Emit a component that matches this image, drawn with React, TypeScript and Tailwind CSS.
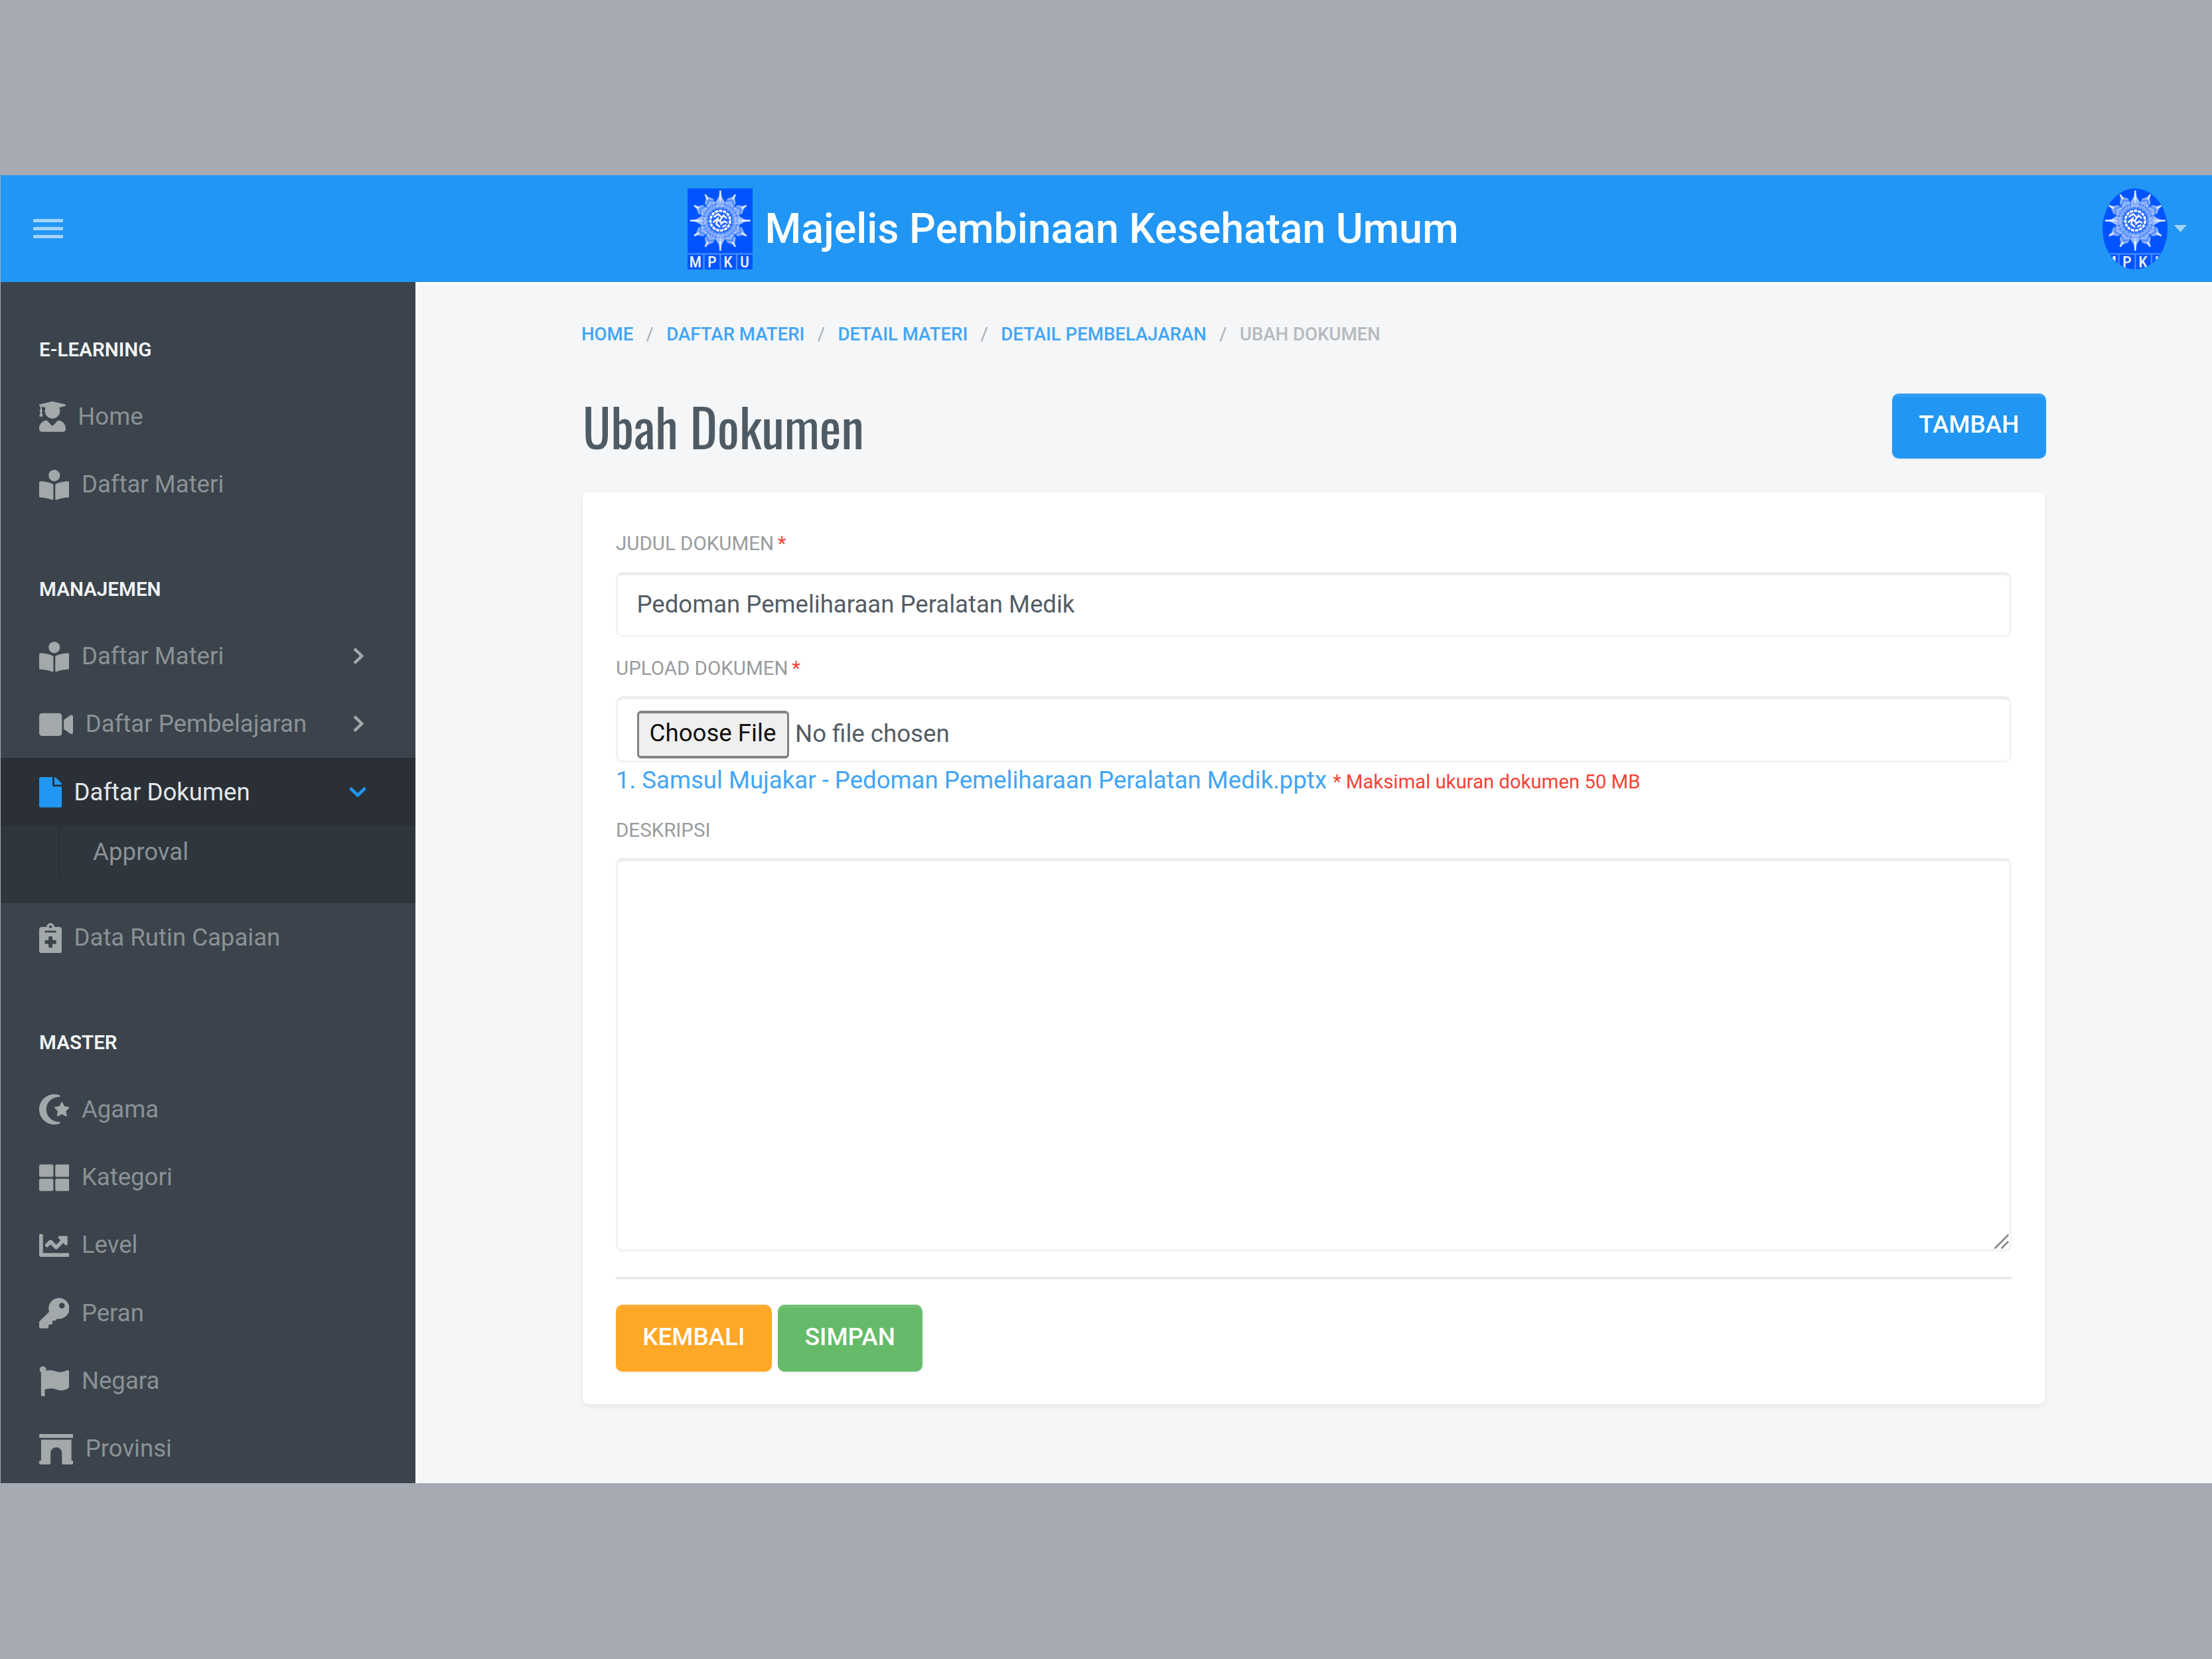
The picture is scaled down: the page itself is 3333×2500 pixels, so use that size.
import React from "react";
import type { IconType } from "react-icons";
import {
  FaArchway,
  FaBookReader,
  FaChartLine,
  FaFile,
  FaFlag,
  FaKey,
  FaNotesMedical,
  FaStarAndCrescent,
  FaThLarge,
  FaUserGraduate,
  FaVideo,
} from "react-icons/fa";

type Item = {
  icon: IconType;
  iconWidth: string;
  label: string;
  arrow?: "right" | "down";
  children?: string[];
};

const W_384 = "w-[34.3px]";
const W_448 = "w-[40px]";
const W_512 = "w-[45.7px]";
const W_576 = "w-[51.5px]";

const sections: { title: string; height: string; items: Item[] }[] = [
  {
    title: "E-LEARNING",
    height: "h-[151px]",
    items: [
      { icon: FaUserGraduate, iconWidth: W_448, label: "Home" },
      { icon: FaBookReader, iconWidth: W_512, label: "Daftar Materi" },
    ],
  },
  {
    title: "MANAJEMEN",
    height: "h-[156.5px]",
    items: [
      { icon: FaBookReader, iconWidth: W_512, label: "Daftar Materi", arrow: "right" },
      { icon: FaVideo, iconWidth: W_576, label: "Daftar Pembelajaran", arrow: "right" },
      { icon: FaFile, iconWidth: W_384, label: "Daftar Dokumen", arrow: "down", children: ["Approval"] },
      { icon: FaNotesMedical, iconWidth: W_384, label: "Data Rutin Capaian" },
    ],
  },
  {
    title: "MASTER",
    height: "h-[156px]",
    items: [
      { icon: FaStarAndCrescent, iconWidth: W_512, label: "Agama" },
      { icon: FaThLarge, iconWidth: W_512, label: "Kategori" },
      { icon: FaChartLine, iconWidth: W_512, label: "Level" },
      { icon: FaKey, iconWidth: W_512, label: "Peran" },
      { icon: FaFlag, iconWidth: W_512, label: "Negara" },
      { icon: FaArchway, iconWidth: W_576, label: "Provinsi" },
    ],
  },
];

const crumbs = ["HOME", "DAFTAR MATERI", "DETAIL MATERI", "DETAIL PEMBELAJARAN"];

function Logo() {
  const rays = Array.from({ length: 12 }, (_, i) => i * 30);
  return (
    <svg viewBox="0 0 98 122" className="block h-[122px] w-[98px] overflow-visible">
      <rect width="98" height="122" fill="#0054ff" />
      <g transform="translate(49.3 48.5)">
        <circle r="24" fill="none" stroke="#fff" strokeOpacity="0.22" strokeWidth="12" />
        {rays.map((a) => {
          const long = a % 90 === 0;
          return (
            <g key={a} transform={`rotate(${a})`}>
              <path
                d={
                  long
                    ? "M0 -46.5L2.6 -36L7 -28L5 -18H-5L-7 -28L-2.6 -36Z"
                    : "M0 -45.5L2.2 -41L7.5 -34L7 -28L5 -18H-5L-7 -28L-7.5 -34L-2.2 -41Z"
                }
                fill="#fff"
                fillOpacity={long ? 0.46 : 0.36}
              />
              <path d={long ? "M0 -45.5L0 -30" : "M0 -45.5L0 -37"} stroke="#fff" strokeOpacity="0.8" strokeWidth="2.6" />
              <path
                d={long ? "M-4.5 -29L0 -36L4.5 -29M-4 -23L0 -29L4 -23" : "M-6.5 -33L0 -39L6.5 -33M-6 -27L0 -32L6 -27"}
                fill="none"
                stroke="#fff"
                strokeOpacity="0.45"
                strokeWidth="1.5"
              />
            </g>
          );
        })}
        <circle r="25.5" fill="none" stroke="#0054ff" strokeOpacity="0.45" strokeWidth="2" strokeDasharray="3 2" />
        <circle r="19.5" fill="none" stroke="#0054ff" strokeOpacity="0.5" strokeWidth="2.4" strokeDasharray="4 1.5" />
        <circle r="15" fill="#2b6bff" stroke="#fff" strokeWidth="3.4" strokeDasharray="5 1.2" />
        <path
          d="M-9 -6L-3 -10L1 -6M-10 2L-4 -3L-6 5L-1 9M0 -1L5 -8L9 -4M1 5L6 1L10 3M-3 -1L2 3M4 9L8 7"
          fill="none"
          stroke="#fff"
          strokeWidth="2.4"
          strokeLinecap="round"
        />
      </g>
      <path d="M0 98.6H98M24.6 98.6V122M49.4 98.6V122M74 98.6V122" stroke="#4a8cff" strokeWidth="2.4" />
      <g fill="#fff" fillOpacity="0.92" fontFamily="'Roboto Condensed', Roboto, sans-serif" fontWeight="500" fontSize="24.5" textAnchor="middle">
        <text x="11.8" y="119.3">M</text>
        <text x="36.8" y="119.3">P</text>
        <text x="61" y="119.3">K</text>
        <text x="86" y="119.3">U</text>
      </g>
    </svg>
  );
}

function Header() {
  return (
    <header className="flex h-[161px] items-center bg-[#2196f5] pr-[38px] pl-[48.5px]">
      <div className="flex w-[45.5px] flex-col gap-[6.5px]">
        <div className="h-[5.5px] bg-[#a3d3fb]" />
        <div className="h-[5.5px] bg-[#a3d3fb]" />
        <div className="h-[5.5px] bg-[#a3d3fb]" />
      </div>
      <div className="ml-[940.5px] flex items-center gap-[19px]">
        <Logo />
        <span className="pt-[1px] text-[62.6px] leading-none font-medium whitespace-nowrap text-white">
          Majelis Pembinaan Kesehatan Umum
        </span>
      </div>
      <div className="ml-auto flex items-center gap-[10px]">
        <div className="overflow-hidden rounded-[50%]">
          <Logo />
        </div>
        <svg viewBox="0 0 19 11" className="h-[11px] w-[19px]">
          <path d="M0 0H19L9.5 11Z" fill="#a3d3fb" />
        </svg>
      </div>
    </header>
  );
}

function NavItem({ item }: { item: Item }) {
  const Icon = item.icon;
  const active = item.arrow === "down";
  return (
    <li>
      <div className={`flex h-[102.4px] items-center pr-[75px] pl-[57.5px] ${active ? "bg-[#2a3036]" : ""}`}>
        <Icon
          preserveAspectRatio="xMidYMid meet"
          className={`mt-[2px] h-[45.7px] shrink-0 ${item.iconWidth} ${active ? "text-[#2196f3]" : "text-[#a3a8ab]"}`}
        />
        <span className={`ml-[18.7px] pt-[1px] text-[36.6px] leading-[38px] whitespace-nowrap ${active ? "text-[#e4e7ea]" : "text-[#8b9195]"}`}>
          {item.label}
        </span>
        {item.arrow === "right" && (
          <svg viewBox="0 0 25 25" className="mr-[-1px] ml-auto h-[25px] w-[25px]" fill="none" stroke="#a3a8ab" strokeWidth="4.4">
            <path d="M7 1.7L18.2 12.5L7 23.3" />
          </svg>
        )}
        {item.arrow === "down" && (
          <svg viewBox="0 0 26 25" className="mr-[-1px] ml-auto h-[25px] w-[26px]" fill="none" stroke="#2196f3" strokeWidth="4.8">
            <path d="M1.7 6.5L13 17.5L24.3 6.5" />
          </svg>
        )}
      </div>
      {item.children && (
        <ul className="h-[117px] bg-[#2f363d] pl-[87px]">
          {item.children.map((c) => (
            <li key={c} className="flex h-[78px] items-center border-l-[3px] border-[#2a3036] pt-[1px] pl-[49px] text-[36.7px] leading-none text-[#8b9195]">
              {c}
            </li>
          ))}
        </ul>
      )}
    </li>
  );
}

function Sidebar() {
  return (
    <aside className="w-[625px] shrink-0 overflow-hidden bg-[#3b444c]">
      {sections.map((s) => (
        <section key={s.title}>
          <h2 className={`flex items-end pb-[31px] pl-[58px] text-[29.6px] leading-[36px] font-semibold text-[#f2f4f5] ${s.height}`}>
            {s.title}
          </h2>
          <ul>
            {s.items.map((item) => (
              <NavItem key={item.label} item={item} />
            ))}
          </ul>
        </section>
      ))}
    </aside>
  );
}

function Label({ children, required }: { children: string; required?: boolean }) {
  return (
    <label className="block text-[29.5px] leading-[40px] whitespace-nowrap text-[#989c9d]">
      {children}
      {required && <span className="ml-[-1.5px] text-[#f44336]"> *</span>}
    </label>
  );
}

const field = "rounded-[10px] border-[3px] border-t-[5px] border-[#f1f3f3] border-t-[#ededed] bg-white";
const button =
  "flex items-center justify-center rounded-[10px] pb-[2px] text-[36.8px] leading-none font-medium text-white shadow-[inset_0_5px_0_rgba(255,255,255,0.08),0_2px_3px_rgba(0,0,0,0.06)]";

function Content() {
  return (
    <main className="flex-1 border-t-[3px] border-l-[3px] border-white bg-[#f4f6f8] pt-[56px] pr-[250px] pl-[249px]">
      <nav className="ml-[-2px] flex text-[27.6px] leading-[40px] font-medium whitespace-nowrap">
        {crumbs.map((c) => (
          <React.Fragment key={c}>
            <a className="text-[#42a5f5]">{c}</a>
            <span className="mx-[19.3px] font-normal text-[#a9adb1]">/</span>
          </React.Fragment>
        ))}
        <span className="text-[#b6babe]">UBAH DOKUMEN</span>
      </nav>

      <div className="mt-[68.5px] flex h-[98.5px] items-center justify-between">
        <h1 className="font-['Oswald',sans-serif] text-[78px] leading-none font-normal text-[#4f5b64]">Ubah Dokumen</h1>
        <button className={`${button} h-[98.5px] w-[232.5px] bg-[#2196f3]`}>TAMBAH</button>
      </div>

      <div className="mt-[51px] w-[2203px] rounded-[8px] bg-white px-[50px] pt-[57px] pb-[49px] shadow-[0_3px_8px_rgba(0,0,0,0.07)]">
        <Label required>JUDUL DOKUMEN</Label>
        <div className={`${field} mt-[22.5px] flex h-[98px] items-center pl-[28.5px] text-[36.55px] leading-none text-[#535c64]`}>
          Pedoman Pemeliharaan Peralatan Medik
        </div>

        <div className="mt-[27px]">
          <Label required>UPLOAD DOKUMEN</Label>
        </div>
        <div className={`${field} mt-[22.5px] flex h-[100px] items-start gap-[9.5px] pt-[17px] pl-[28.5px] text-[36.65px] leading-none text-[#535c64]`}>
          <button className="flex h-[72px] w-[229px] items-center justify-center rounded-[6px] border-x-[3px] border-y-[4px] border-[#828282] bg-[#efefef] pb-[3px] whitespace-nowrap text-[#111]">
            Choose File
          </button>
          <span className="pt-[16px] leading-[37px]">No file chosen</span>
        </div>
        <div className="h-[50px] pt-[2px] text-[36.6px] leading-[50px] whitespace-nowrap text-[#42a5f5]">
          1. Samsul Mujakar - Pedoman Pemeliharaan Peralatan Medik.pptx{" "}
          <span className="text-[29.3px] text-[#f44336]">* Maksimal ukuran dokumen 50 MB</span>
        </div>

        <div className="mt-[31.5px]">
          <Label>DESKRIPSI</Label>
        </div>
        <div className={`${field} mt-[22px] flex h-[593px] items-end justify-end pr-[1px] pb-[1px]`}>
          <svg viewBox="0 0 22 22" className="h-[22px] w-[22px]" stroke="#858585" strokeWidth="2.6" strokeLinecap="round">
            <path d="M1.5 20.5L20.5 1.5M11.5 20.5L20.5 11.5" />
          </svg>
        </div>

        <hr className="mt-[38.5px] h-[3.5px] border-0 bg-[#e8eaea]" />

        <div className="mt-[38px] flex gap-[9.5px]">
          <button className={`${button} h-[101px] w-[234.5px] bg-[#ffa726]`}>KEMBALI</button>
          <button className={`${button} h-[101px] w-[217.5px] bg-[#66bb6a]`}>SIMPAN</button>
        </div>
      </div>
    </main>
  );
}

export default function App() {
  return (
    <div className="h-[2500px] w-[3333px] overflow-hidden bg-[#a6aab2] pt-[264px] pl-px font-['Roboto',sans-serif]">
      <div className="flex h-[1970.5px] flex-col overflow-hidden">
        <Header />
        <div className="flex min-h-0 flex-1">
          <Sidebar />
          <Content />
        </div>
      </div>
    </div>
  );
}
